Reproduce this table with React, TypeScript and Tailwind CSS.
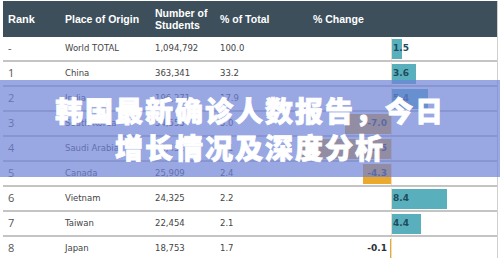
const rows = [
  { rank: '-', place: 'World TOTAL', students: '1,094,792', pct: '100.0', change: 1.5 },
  { rank: '1', place: 'China', students: '363,341', pct: '33.2', change: 3.6 },
  { rank: '2', place: 'India', students: '196,271', pct: '17.9', change: 5.4 },
  { rank: '3', place: 'South Korea', students: '54,555', pct: '5.0', change: -7.0 },
  { rank: '4', place: 'Saudi Arabia', students: '44,432', pct: '4.1', change: -15.5 },
  { rank: '5', place: 'Canada', students: '25,909', pct: '2.4', change: -4.3 },
  { rank: '6', place: 'Vietnam', students: '24,325', pct: '2.2', change: 8.4 },
  { rank: '7', place: 'Taiwan', students: '22,454', pct: '2.1', change: 4.4 },
  { rank: '8', place: 'Japan', students: '18,753', pct: '1.7', change: -0.1 },
];

const SCALE = 6.6;

function ChangeCell({ value }: { value: number }) {
  const w = Math.min(Math.abs(value) * SCALE, 92);
  const label = value.toFixed(1);
  return (
    <div className="flex h-full">
      <div className="relative w-[92px] h-full flex justify-end items-center border-r border-[#eadfc6]">
        {value < 0 && <div className="h-[20px] bg-[#eba92e]" style={{ width: w }} />}
        {value < 0 && (
          <span className="absolute right-[4px] top-1/2 -translate-y-1/2 font-['DejaVu_Sans',sans-serif] font-bold text-[9px] text-[#2b3138]">
            {label}
          </span>
        )}
      </div>
      <div className="relative flex-1 h-full flex items-center">
        {value > 0 && <div className="h-[20px] bg-[#5aafbd]" style={{ width: w }} />}
        {value > 0 && (
          <span className="absolute left-[1px] top-1/2 -translate-y-1/2 font-['DejaVu_Sans',sans-serif] font-bold text-[9px] text-[#1d4c5b]">
            {label}
          </span>
        )}
      </div>
    </div>
  );
}

export default function App() {
  return (
    <div className="relative w-[500px] h-[258px] overflow-hidden bg-white">
      <div className="pl-[3px] pr-[2px] pt-px">
        <div className="border-r border-[#cfcfcf]">
          <div className="grid grid-cols-[62px_90px_65px_80px_1fr] h-[36px] bg-[#3d4f5b] text-white font-['Liberation_Sans',Arial,sans-serif] font-bold text-[10.5px] leading-[12px] items-center">
            <div className="pl-[5px] text-[11px]">Rank</div>
            <div>Place of Origin</div>
            <div>
              Number of
              <br />
              Students
            </div>
            <div>% of Total</div>
            <div className="pl-[13px]">% Change</div>
          </div>
          {rows.map((r) => (
            <div
              key={r.rank + r.place}
              className="grid grid-cols-[62px_90px_65px_80px_1fr] h-[25px] border-b-2 border-[#c4c4c4] items-center text-[#444] font-['DejaVu_Sans',Verdana,sans-serif] text-[8.5px]"
            >
              <div className="pl-[5px] font-['Open_Sans',sans-serif] text-[11px] text-[#555]">{r.rank}</div>
              <div>{r.place}</div>
              <div>{r.students}</div>
              <div>{r.pct}</div>
              <div className="h-full pt-[1px]">
                <ChangeCell value={r.change} />
              </div>
            </div>
          ))}
        </div>
      </div>
      <div className="absolute left-0 right-0 top-[80px] h-[97px] bg-[rgba(110,130,215,0.7)] flex flex-col items-center justify-center text-white font-black text-[28px] leading-[37px] tracking-[2px] [-webkit-text-stroke:0.8px_#fff] font-['Noto_Sans_CJK_SC','Noto_Sans',sans-serif]">
        <div>韩国最新确诊人数报告，今日</div>
        <div>增长情况及深度分析</div>
      </div>
    </div>
  );
}
